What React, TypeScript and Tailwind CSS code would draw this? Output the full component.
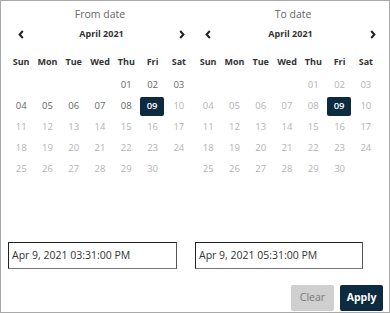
import React from 'react';

interface CalendarProp {
  title: string;
  titleClass: string;
  navClass: string;
  enabledUpTo: number;
}

const days = ['Sun', 'Mon', 'Tue', 'Wed', 'Thu', 'Fri', 'Sat'];

// April 2021 starts on a Thursday
const cells: (number | null)[] = [null, null, null, null, ...Array.from({ length: 30 }, (_, i) => i + 1)];

const Chevron = ({ dir }: { dir: 'left' | 'right' }) => (
  <svg width="6" height="9" viewBox="0 0 6 9" className="block">
    <path
      d={dir === 'left' ? 'M4.8 1 L1.6 4.5 L4.8 8' : 'M1.2 1 L4.4 4.5 L1.2 8'}
      fill="none"
      stroke="#222"
      strokeWidth="2"
    />
  </svg>
);

const Calendar: React.FC<CalendarProp> = ({ title, titleClass, navClass, enabledUpTo }) => {
  return (
    <div className="w-[184px] flex flex-col">
      <div className={`h-[18px] flex items-center justify-center text-[10.5px] text-[#666] ${titleClass}`}>{title}</div>
      <div className={`h-[20px] flex items-center justify-between ${navClass}`}>
        <Chevron dir="left" />
        <span className="text-[9px] font-bold text-[#333]">April 2021</span>
        <Chevron dir="right" />
      </div>
      <div className="mt-[8px] h-[20px] grid grid-cols-7 items-center">
        {days.map((d) => (
          <div key={d} className="text-center text-[9px] font-bold text-[#333]">
            {d}
          </div>
        ))}
      </div>
      <div className="mt-[3px] grid grid-cols-7">
        {cells.map((c, i) => (
          <div key={i} className="h-[21px] flex items-center justify-center">
            {c === null ? null : c === 9 ? (
              <span className="w-[24px] h-[19px] rounded-[2px] bg-[#0c2a40] text-white text-[9.5px] font-semibold flex items-center justify-center -ml-[1px]">
                09
              </span>
            ) : (
              <span className={`text-[9.5px] ${c <= enabledUpTo ? 'text-[#666]' : 'text-[#b3b3b3]'}`}>
                {String(c).padStart(2, '0')}
              </span>
            )}
          </div>
        ))}
      </div>
    </div>
  );
};

export default function App() {
  return (
    <div
      className="w-[390px] h-[313px] border border-[#a9a9a9] bg-white flex flex-col pl-[7px] pt-[5px] pr-[6px]"
      style={{ fontFamily: '"Open Sans", sans-serif' }}
    >
      <div className="flex gap-[3px]">
        <Calendar title="From date" titleClass="" navClass="pl-[10px] pr-[7px]" enabledUpTo={8} />
        <Calendar title="To date" titleClass="pl-[12px]" navClass="pl-[10px] pr-[3px]" enabledUpTo={0} />
      </div>
      <div className="mt-[62px] flex gap-[18px]">
        <div className="w-[169px] h-[27px] border border-t-[#222] border-l-[#222] border-r-[#555] border-b-[#777] flex items-center pl-[3px] text-[10.5px] text-[#333]">
          Apr 9, 2021 03:31:00 PM
        </div>
        <div className="w-[168px] h-[27px] border border-t-[#222] border-l-[#222] border-r-[#555] border-b-[#777] flex items-center pl-[3px] text-[10.5px] text-[#333]">
          Apr 9, 2021 05:31:00 PM
        </div>
      </div>
      <div className="mt-[16px] flex justify-end gap-[6px]">
        <button className="w-[43px] h-[26px] rounded-[2px] bg-[#cfcfcf] text-[10.5px] text-[#777]">Clear</button>
        <button className="w-[43px] h-[26px] rounded-[2px] bg-[#0c2a40] text-[10.5px] font-bold text-white">Apply</button>
      </div>
    </div>
  );
}
